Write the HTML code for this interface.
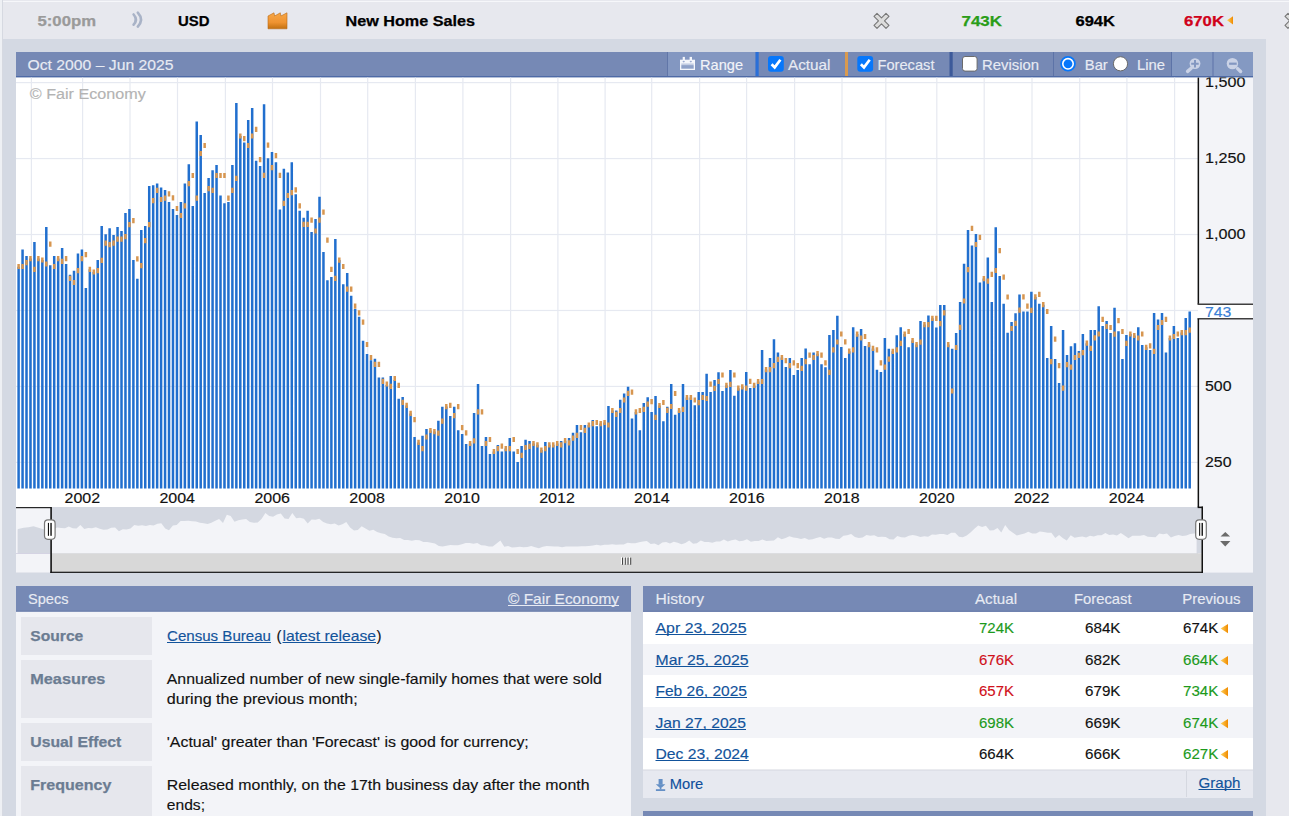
<!DOCTYPE html>
<html><head><meta charset="utf-8"><title>New Home Sales</title>
<style>html,body{margin:0;padding:0;width:1289px;height:816px;overflow:hidden;background:#e7e8ee;font-family:"Liberation Sans", sans-serif;}</style>
</head><body><svg width="1289" height="816" viewBox="0 0 1289 816" style="display:block" font-family='"Liberation Sans", sans-serif'><rect x="0" y="0" width="1289" height="816" fill="#e7e8ee"/><rect x="0" y="1" width="1289" height="1" fill="#f6f7fa"/><rect x="0" y="0" width="2" height="816" fill="#eef0f4"/><rect x="2" y="0" width="1" height="816" fill="#d6d9e1"/><rect x="3" y="39" width="1263" height="777" fill="#d4d9e3"/><text x="37.5" y="26" font-size="14.5" fill="#9a9a9a" font-weight="bold" textLength="58.5" lengthAdjust="spacingAndGlyphs" stroke="#9a9a9a" stroke-width="0.25" >5:00pm</text><g fill="none" stroke="#a9b3c7" stroke-width="2.6" stroke-linecap="round"><path d="M133.6 14.5 Q138.2 19.6 133.6 24.7"/><path d="M137.8 12.6 Q144.2 19.6 137.8 26.6"/></g><text x="178" y="26" font-size="14.5" fill="#000" font-weight="bold" textLength="31.5" lengthAdjust="spacingAndGlyphs" stroke="#000" stroke-width="0.25" >USD</text><defs><linearGradient id="fac" x1="0" y1="0" x2="0" y2="1"><stop offset="0" stop-color="#f7a748"/><stop offset="0.6" stop-color="#ef9330"/><stop offset="1" stop-color="#c2700f"/></linearGradient><linearGradient id="arr" x1="0" y1="0" x2="1" y2="0"><stop offset="0" stop-color="#ffd25a"/><stop offset="1" stop-color="#f08a00"/></linearGradient></defs><path d="M268 16 L274 12.8 L274.6 16 L280.3 12.8 L280.9 16 L287 12.8 L287 28.8 L268 28.8 Z" fill="url(#fac)" stroke="#b96a14" stroke-width="0.6"/><text x="345.5" y="26" font-size="14.5" fill="#000" font-weight="bold" textLength="129.5" lengthAdjust="spacingAndGlyphs" stroke="#000" stroke-width="0.25" >New Home Sales</text><g transform="translate(881.5 20.8)"><path d="M-7.5 -4.5 L-4.5 -7.5 L0 -3 L4.5 -7.5 L7.5 -4.5 L3 0 L7.5 4.5 L4.5 7.5 L0 3 L-4.5 7.5 L-7.5 4.5 L-3 0 Z" fill="#dcdcdc" stroke="#777" stroke-width="1.1" stroke-linejoin="round"/></g><text x="961.5" y="26" font-size="14.5" fill="#2a9d18" font-weight="bold" textLength="40.5" lengthAdjust="spacingAndGlyphs" stroke="#2a9d18" stroke-width="0.25" >743K</text><text x="1075.5" y="26" font-size="14.5" fill="#000" font-weight="bold" textLength="39.5" lengthAdjust="spacingAndGlyphs" stroke="#000" stroke-width="0.25" >694K</text><text x="1184" y="26" font-size="14.5" fill="#d0021b" font-weight="bold" textLength="40" lengthAdjust="spacingAndGlyphs" stroke="#d0021b" stroke-width="0.25" >670K</text><path d="M1227 20.3 L1233 16.2 L1233 24.4 Z" fill="url(#arr)"/><g transform="translate(1292.5 20.8)"><path d="M-7.5 -4.5 L-4.5 -7.5 L0 -3 L4.5 -7.5 L7.5 -4.5 L3 0 L7.5 4.5 L4.5 7.5 L0 3 L-4.5 7.5 L-7.5 4.5 L-3 0 Z" fill="#dcdcdc" stroke="#777" stroke-width="1.1" stroke-linejoin="round"/></g><rect x="16" y="52" width="1237" height="25" fill="#7689b5"/><rect x="16" y="76" width="1237" height="1.6" fill="#4e6aa6"/><text x="27.5" y="70" font-size="14.5" fill="#e8ebf3" textLength="146" lengthAdjust="spacingAndGlyphs" stroke="#e8ebf3" stroke-width="0.15" >Oct 2000 – Jun 2025</text><rect x="667" y="52" width="88.5" height="24" fill="#8397c1"/><rect x="667" y="52" width="1" height="24" fill="#6176a8"/><rect x="755.5" y="52" width="3.2" height="24" fill="#2a6fd8"/><rect x="680" y="59.7" width="15" height="10.3" fill="#f4f6fb"/><rect x="681.3" y="63.4" width="12.4" height="1.6" fill="#c3cde3"/><rect x="681.3" y="65.1" width="12.4" height="3.6" fill="#8ea1c8"/><rect x="682.7" y="56.9" width="2.2" height="3.2" fill="#f4f6fb"/><rect x="689.6" y="56.9" width="2.4" height="3.2" fill="#f4f6fb"/><ellipse cx="683.7" cy="61.6" rx="1.1" ry="0.8" fill="#9aaad0"/><ellipse cx="690.8" cy="61.6" rx="1.1" ry="0.8" fill="#9aaad0"/><text x="700" y="69.5" font-size="14.5" fill="#f2f4f9" textLength="43" lengthAdjust="spacingAndGlyphs" stroke="#f2f4f9" stroke-width="0.15" >Range</text><rect x="768" y="56" width="15.8" height="15.8" rx="3" fill="#0677fb"/><path d="M771.6 64.2 L774.7 67.4 L780.4 59.8" fill="none" stroke="#fff" stroke-width="2.7" stroke-linecap="butt" stroke-linejoin="miter"/><text x="788" y="70" font-size="14.5" fill="#e8ebf3" textLength="42.5" lengthAdjust="spacingAndGlyphs" stroke="#e8ebf3" stroke-width="0.15" >Actual</text><rect x="845" y="52" width="3" height="24" fill="#d99a4f"/><rect x="857.3" y="56" width="15.8" height="15.8" rx="3" fill="#0677fb"/><path d="M860.9 64.2 L864 67.4 L869.7 59.8" fill="none" stroke="#fff" stroke-width="2.7" stroke-linecap="butt" stroke-linejoin="miter"/><text x="877.5" y="70" font-size="14.5" fill="#e8ebf3" textLength="57" lengthAdjust="spacingAndGlyphs" stroke="#e8ebf3" stroke-width="0.15" >Forecast</text><rect x="949.5" y="52" width="3.2" height="24" fill="#3d5a9a"/><rect x="962.5" y="56.5" width="14.6" height="14.6" rx="2.5" fill="#fff" stroke="#6b6b6b" stroke-width="1"/><text x="982" y="70" font-size="14.5" fill="#e8ebf3" textLength="57" lengthAdjust="spacingAndGlyphs" stroke="#e8ebf3" stroke-width="0.15" >Revision</text><rect x="1053" y="52" width="1" height="24" fill="#5d73a7"/><circle cx="1068" cy="63.8" r="6.9" fill="#fff" stroke="#0677fb" stroke-width="1.8"/><circle cx="1068" cy="63.8" r="4.4" fill="#0677fb"/><text x="1084.8" y="70" font-size="14.5" fill="#e8ebf3" textLength="23" lengthAdjust="spacingAndGlyphs" stroke="#e8ebf3" stroke-width="0.15" >Bar</text><circle cx="1120.5" cy="63.8" r="7.1" fill="#fff" stroke="#6b6b6b" stroke-width="1"/><text x="1137" y="70" font-size="14.5" fill="#e8ebf3" textLength="28" lengthAdjust="spacingAndGlyphs" stroke="#e8ebf3" stroke-width="0.15" >Line</text><rect x="1171.5" y="52" width="81.5" height="24" fill="#8499c2"/><rect x="1171" y="52" width="1" height="24" fill="#5d73a7"/><rect x="1212.5" y="52" width="1" height="24" fill="#5d73a7"/><circle cx="1195" cy="63.6" r="5.4" fill="#cad2e6"/><path d="M1194 59.9 h2 v2.8 h2.7 v2 h-2.7 v2.8 h-2 v-2.8 h-2.8 v-2 h2.8 Z" fill="#8397c1"/><path d="M1191.2 68.3 L1187.6 71.4" stroke="#cad2e6" stroke-width="3.4" stroke-linecap="round"/><circle cx="1232.4" cy="63.6" r="5.7" fill="#cad2e6"/><rect x="1229.1" y="62.6" width="7.6" height="2.2" fill="#8397c1"/><path d="M1237.6 68.6 L1240.6 71.5" stroke="#cad2e6" stroke-width="3.4" stroke-linecap="round"/><rect x="16" y="77.6" width="1182" height="429.5" fill="#ffffff"/><rect x="1198" y="77.6" width="55" height="495" fill="#f3f4f8"/><rect x="16" y="82.00" width="1182" height="1.2" fill="#e6e9f1"/><rect x="16" y="157.96" width="1182" height="1.2" fill="#e6e9f1"/><rect x="16" y="233.92" width="1182" height="1.2" fill="#e6e9f1"/><rect x="16" y="309.88" width="1182" height="1.2" fill="#e6e9f1"/><rect x="16" y="385.84" width="1182" height="1.2" fill="#e6e9f1"/><rect x="16" y="461.80" width="1182" height="1.2" fill="#e6e9f1"/><rect x="30.80" y="77.6" width="1.2" height="411" fill="#e6e9f1"/><rect x="82.00" y="77.6" width="1.2" height="411" fill="#e6e9f1"/><rect x="129.40" y="77.6" width="1.2" height="411" fill="#e6e9f1"/><rect x="176.90" y="77.6" width="1.2" height="411" fill="#e6e9f1"/><rect x="224.80" y="77.6" width="1.2" height="411" fill="#e6e9f1"/><rect x="271.90" y="77.6" width="1.2" height="411" fill="#e6e9f1"/><rect x="319.90" y="77.6" width="1.2" height="411" fill="#e6e9f1"/><rect x="367.10" y="77.6" width="1.2" height="411" fill="#e6e9f1"/><rect x="414.80" y="77.6" width="1.2" height="411" fill="#e6e9f1"/><rect x="462.30" y="77.6" width="1.2" height="411" fill="#e6e9f1"/><rect x="510.00" y="77.6" width="1.2" height="411" fill="#e6e9f1"/><rect x="557.30" y="77.6" width="1.2" height="411" fill="#e6e9f1"/><rect x="604.50" y="77.6" width="1.2" height="411" fill="#e6e9f1"/><rect x="651.10" y="77.6" width="1.2" height="411" fill="#e6e9f1"/><rect x="699.00" y="77.6" width="1.2" height="411" fill="#e6e9f1"/><rect x="746.00" y="77.6" width="1.2" height="411" fill="#e6e9f1"/><rect x="794.00" y="77.6" width="1.2" height="411" fill="#e6e9f1"/><rect x="841.40" y="77.6" width="1.2" height="411" fill="#e6e9f1"/><rect x="885.20" y="77.6" width="1.2" height="411" fill="#e6e9f1"/><rect x="936.20" y="77.6" width="1.2" height="411" fill="#e6e9f1"/><rect x="983.60" y="77.6" width="1.2" height="411" fill="#e6e9f1"/><rect x="1031.40" y="77.6" width="1.2" height="411" fill="#e6e9f1"/><rect x="1079.10" y="77.6" width="1.2" height="411" fill="#e6e9f1"/><rect x="1126.30" y="77.6" width="1.2" height="411" fill="#e6e9f1"/><rect x="1174.00" y="77.6" width="1.2" height="411" fill="#e6e9f1"/><text x="29.8" y="99" font-size="15.3" fill="#b3b3b3" textLength="116" lengthAdjust="spacingAndGlyphs" stroke="#b3b3b3" stroke-width="0.15" >© Fair Economy</text><path d="M17.35 266.8h2.5V488.5h-2.5ZM21.31 249.6h2.5V488.5h-2.5ZM25.26 256.0h2.5V488.5h-2.5ZM29.22 258.6h2.5V488.5h-2.5ZM33.18 241.9h2.5V488.5h-2.5ZM37.14 258.6h2.5V488.5h-2.5ZM41.09 260.0h2.5V488.5h-2.5ZM45.05 227.0h2.5V488.5h-2.5ZM49.01 265.3h2.5V488.5h-2.5ZM52.96 256.0h2.5V488.5h-2.5ZM56.92 258.6h2.5V488.5h-2.5ZM60.88 248.0h2.5V488.5h-2.5ZM64.84 264.0h2.5V488.5h-2.5ZM68.79 274.7h2.5V488.5h-2.5ZM72.75 270.8h2.5V488.5h-2.5ZM76.71 253.5h2.5V488.5h-2.5ZM80.66 249.6h2.5V488.5h-2.5ZM84.62 288.0h2.5V488.5h-2.5ZM88.58 269.3h2.5V488.5h-2.5ZM92.54 272.0h2.5V488.5h-2.5ZM96.49 260.1h2.5V488.5h-2.5ZM100.45 226.1h2.5V488.5h-2.5ZM104.41 234.2h2.5V488.5h-2.5ZM108.37 228.3h2.5V488.5h-2.5ZM112.33 235.0h2.5V488.5h-2.5ZM116.29 227.0h2.5V488.5h-2.5ZM120.25 230.9h2.5V488.5h-2.5ZM124.21 212.9h2.5V488.5h-2.5ZM128.17 208.9h2.5V488.5h-2.5ZM132.13 260.1h2.5V488.5h-2.5ZM136.09 278.8h2.5V488.5h-2.5ZM140.05 230.0h2.5V488.5h-2.5ZM144.01 226.1h2.5V488.5h-2.5ZM147.97 186.1h2.5V488.5h-2.5ZM151.93 185.2h2.5V488.5h-2.5ZM155.89 183.5h2.5V488.5h-2.5ZM159.85 187.5h2.5V488.5h-2.5ZM163.81 190.0h2.5V488.5h-2.5ZM167.77 202.1h2.5V488.5h-2.5ZM171.73 208.9h2.5V488.5h-2.5ZM175.69 215.0h2.5V488.5h-2.5ZM179.65 202.1h2.5V488.5h-2.5ZM183.61 183.6h2.5V488.5h-2.5ZM187.57 164.2h2.5V488.5h-2.5ZM191.53 206.1h2.5V488.5h-2.5ZM195.49 121.4h2.5V488.5h-2.5ZM199.45 135.0h2.5V488.5h-2.5ZM203.41 193.0h2.5V488.5h-2.5ZM207.37 178.1h2.5V488.5h-2.5ZM211.33 170.2h2.5V488.5h-2.5ZM215.29 165.0h2.5V488.5h-2.5ZM219.25 195.6h2.5V488.5h-2.5ZM223.21 203.3h2.5V488.5h-2.5ZM227.17 201.9h2.5V488.5h-2.5ZM231.13 165.0h2.5V488.5h-2.5ZM235.09 102.9h2.5V488.5h-2.5ZM239.05 136.0h2.5V488.5h-2.5ZM243.01 142.4h2.5V488.5h-2.5ZM246.97 120.0h2.5V488.5h-2.5ZM250.93 108.0h2.5V488.5h-2.5ZM254.89 160.7h2.5V488.5h-2.5ZM258.85 166.0h2.5V488.5h-2.5ZM262.81 104.3h2.5V488.5h-2.5ZM266.77 158.3h2.5V488.5h-2.5ZM270.73 151.9h2.5V488.5h-2.5ZM274.69 162.2h2.5V488.5h-2.5ZM278.65 209.6h2.5V488.5h-2.5ZM282.61 168.8h2.5V488.5h-2.5ZM286.57 172.6h2.5V488.5h-2.5ZM290.53 162.2h2.5V488.5h-2.5ZM294.49 194.2h2.5V488.5h-2.5ZM298.45 210.7h2.5V488.5h-2.5ZM302.41 217.8h2.5V488.5h-2.5ZM306.37 210.7h2.5V488.5h-2.5ZM310.33 232.1h2.5V488.5h-2.5ZM314.29 219.1h2.5V488.5h-2.5ZM318.25 196.8h2.5V488.5h-2.5ZM322.21 251.9h2.5V488.5h-2.5ZM326.17 280.2h2.5V488.5h-2.5ZM330.13 277.1h2.5V488.5h-2.5ZM334.09 239.0h2.5V488.5h-2.5ZM338.05 260.1h2.5V488.5h-2.5ZM342.01 284.2h2.5V488.5h-2.5ZM345.97 273.1h2.5V488.5h-2.5ZM349.93 295.8h2.5V488.5h-2.5ZM353.89 309.1h2.5V488.5h-2.5ZM357.85 316.8h2.5V488.5h-2.5ZM361.81 340.8h2.5V488.5h-2.5ZM365.77 354.0h2.5V488.5h-2.5ZM369.73 360.2h2.5V488.5h-2.5ZM373.69 358.7h2.5V488.5h-2.5ZM377.65 377.4h2.5V488.5h-2.5ZM381.61 377.4h2.5V488.5h-2.5ZM385.57 384.9h2.5V488.5h-2.5ZM389.53 376.1h2.5V488.5h-2.5ZM393.49 380.0h2.5V488.5h-2.5ZM397.45 398.8h2.5V488.5h-2.5ZM401.42 397.0h2.5V488.5h-2.5ZM405.38 405.4h2.5V488.5h-2.5ZM409.35 413.4h2.5V488.5h-2.5ZM413.32 437.0h2.5V488.5h-2.5ZM417.28 442.4h2.5V488.5h-2.5ZM421.25 435.8h2.5V488.5h-2.5ZM425.22 429.1h2.5V488.5h-2.5ZM429.18 430.5h2.5V488.5h-2.5ZM433.15 431.6h2.5V488.5h-2.5ZM437.12 420.8h2.5V488.5h-2.5ZM441.08 406.8h2.5V488.5h-2.5ZM445.05 406.6h2.5V488.5h-2.5ZM449.02 415.9h2.5V488.5h-2.5ZM452.98 406.8h2.5V488.5h-2.5ZM456.95 430.3h2.5V488.5h-2.5ZM460.92 434.1h2.5V488.5h-2.5ZM464.88 443.9h2.5V488.5h-2.5ZM468.85 443.5h2.5V488.5h-2.5ZM472.82 413.1h2.5V488.5h-2.5ZM476.78 384.1h2.5V488.5h-2.5ZM480.75 446.0h2.5V488.5h-2.5ZM484.72 437.1h2.5V488.5h-2.5ZM488.69 453.9h2.5V488.5h-2.5ZM492.66 451.5h2.5V488.5h-2.5ZM496.63 444.9h2.5V488.5h-2.5ZM500.60 451.5h2.5V488.5h-2.5ZM504.55 448.6h2.5V488.5h-2.5ZM508.51 438.0h2.5V488.5h-2.5ZM512.46 451.5h2.5V488.5h-2.5ZM516.42 462.0h2.5V488.5h-2.5ZM520.37 446.1h2.5V488.5h-2.5ZM524.32 439.7h2.5V488.5h-2.5ZM528.28 441.0h2.5V488.5h-2.5ZM532.23 443.5h2.5V488.5h-2.5ZM536.19 444.8h2.5V488.5h-2.5ZM540.14 450.1h2.5V488.5h-2.5ZM544.09 442.0h2.5V488.5h-2.5ZM548.05 444.8h2.5V488.5h-2.5ZM552.00 444.8h2.5V488.5h-2.5ZM555.96 443.5h2.5V488.5h-2.5ZM559.91 441.0h2.5V488.5h-2.5ZM563.86 440.7h2.5V488.5h-2.5ZM567.82 438.0h2.5V488.5h-2.5ZM571.77 432.8h2.5V488.5h-2.5ZM575.73 425.0h2.5V488.5h-2.5ZM579.68 432.2h2.5V488.5h-2.5ZM583.63 425.0h2.5V488.5h-2.5ZM587.59 425.0h2.5V488.5h-2.5ZM591.54 420.1h2.5V488.5h-2.5ZM595.50 426.3h2.5V488.5h-2.5ZM599.45 423.6h2.5V488.5h-2.5ZM603.33 422.5h2.5V488.5h-2.5ZM607.20 406.0h2.5V488.5h-2.5ZM611.12 410.5h2.5V488.5h-2.5ZM615.05 410.6h2.5V488.5h-2.5ZM618.97 399.8h2.5V488.5h-2.5ZM622.90 393.4h2.5V488.5h-2.5ZM626.82 386.8h2.5V488.5h-2.5ZM630.74 418.4h2.5V488.5h-2.5ZM634.67 411.9h2.5V488.5h-2.5ZM638.59 430.2h2.5V488.5h-2.5ZM642.52 403.0h2.5V488.5h-2.5ZM646.44 397.2h2.5V488.5h-2.5ZM650.36 411.9h2.5V488.5h-2.5ZM654.29 396.0h2.5V488.5h-2.5ZM658.21 405.5h2.5V488.5h-2.5ZM662.13 421.2h2.5V488.5h-2.5ZM666.06 406.8h2.5V488.5h-2.5ZM669.98 384.1h2.5V488.5h-2.5ZM673.91 414.8h2.5V488.5h-2.5ZM677.83 410.5h2.5V488.5h-2.5ZM681.75 384.1h2.5V488.5h-2.5ZM685.68 397.5h2.5V488.5h-2.5ZM689.60 397.5h2.5V488.5h-2.5ZM693.53 405.2h2.5V488.5h-2.5ZM697.45 392.1h2.5V488.5h-2.5ZM701.41 392.1h2.5V488.5h-2.5ZM705.37 373.8h2.5V488.5h-2.5ZM709.33 392.1h2.5V488.5h-2.5ZM713.30 380.0h2.5V488.5h-2.5ZM717.26 372.2h2.5V488.5h-2.5ZM721.22 391.0h2.5V488.5h-2.5ZM725.18 385.3h2.5V488.5h-2.5ZM729.14 369.9h2.5V488.5h-2.5ZM733.10 395.8h2.5V488.5h-2.5ZM737.07 388.2h2.5V488.5h-2.5ZM741.03 386.8h2.5V488.5h-2.5ZM744.99 372.1h2.5V488.5h-2.5ZM748.95 388.0h2.5V488.5h-2.5ZM752.91 385.4h2.5V488.5h-2.5ZM756.87 381.5h2.5V488.5h-2.5ZM760.83 350.0h2.5V488.5h-2.5ZM764.80 369.6h2.5V488.5h-2.5ZM768.76 358.0h2.5V488.5h-2.5ZM772.72 339.2h2.5V488.5h-2.5ZM776.68 352.5h2.5V488.5h-2.5ZM780.64 357.5h2.5V488.5h-2.5ZM784.60 367.0h2.5V488.5h-2.5ZM788.57 358.0h2.5V488.5h-2.5ZM792.53 375.0h2.5V488.5h-2.5ZM796.49 369.9h2.5V488.5h-2.5ZM800.45 358.0h2.5V488.5h-2.5ZM804.41 348.5h2.5V488.5h-2.5ZM808.37 364.2h2.5V488.5h-2.5ZM812.33 352.5h2.5V488.5h-2.5ZM816.29 353.7h2.5V488.5h-2.5ZM820.25 364.2h2.5V488.5h-2.5ZM824.21 367.2h2.5V488.5h-2.5ZM828.17 335.1h2.5V488.5h-2.5ZM832.13 329.9h2.5V488.5h-2.5ZM836.09 315.7h2.5V488.5h-2.5ZM840.05 347.1h2.5V488.5h-2.5ZM844.01 358.0h2.5V488.5h-2.5ZM847.97 351.2h2.5V488.5h-2.5ZM851.93 327.3h2.5V488.5h-2.5ZM855.89 334.1h2.5V488.5h-2.5ZM859.85 328.9h2.5V488.5h-2.5ZM863.81 346.1h2.5V488.5h-2.5ZM867.77 344.6h2.5V488.5h-2.5ZM871.73 348.4h2.5V488.5h-2.5ZM875.69 369.8h2.5V488.5h-2.5ZM879.65 372.0h2.5V488.5h-2.5ZM883.61 337.9h2.5V488.5h-2.5ZM887.57 348.7h2.5V488.5h-2.5ZM891.53 351.3h2.5V488.5h-2.5ZM895.49 335.2h2.5V488.5h-2.5ZM899.45 327.2h2.5V488.5h-2.5ZM903.41 334.1h2.5V488.5h-2.5ZM907.37 347.2h2.5V488.5h-2.5ZM911.33 340.5h2.5V488.5h-2.5ZM915.29 344.6h2.5V488.5h-2.5ZM919.25 321.0h2.5V488.5h-2.5ZM923.21 324.6h2.5V488.5h-2.5ZM927.17 315.6h2.5V488.5h-2.5ZM931.13 318.3h2.5V488.5h-2.5ZM935.09 327.4h2.5V488.5h-2.5ZM939.05 305.0h2.5V488.5h-2.5ZM943.01 305.0h2.5V488.5h-2.5ZM946.97 344.6h2.5V488.5h-2.5ZM950.93 348.7h2.5V488.5h-2.5ZM954.89 333.0h2.5V488.5h-2.5ZM958.85 302.1h2.5V488.5h-2.5ZM962.81 263.8h2.5V488.5h-2.5ZM966.77 229.9h2.5V488.5h-2.5ZM970.73 245.5h2.5V488.5h-2.5ZM974.69 234.0h2.5V488.5h-2.5ZM978.65 282.6h2.5V488.5h-2.5ZM982.61 278.6h2.5V488.5h-2.5ZM986.57 257.5h2.5V488.5h-2.5ZM990.53 302.1h2.5V488.5h-2.5ZM994.49 227.2h2.5V488.5h-2.5ZM998.45 276.1h2.5V488.5h-2.5ZM1002.41 303.7h2.5V488.5h-2.5ZM1006.37 332.8h2.5V488.5h-2.5ZM1010.33 322.0h2.5V488.5h-2.5ZM1014.29 313.2h2.5V488.5h-2.5ZM1018.25 294.4h2.5V488.5h-2.5ZM1022.21 311.6h2.5V488.5h-2.5ZM1026.17 311.6h2.5V488.5h-2.5ZM1030.13 291.8h2.5V488.5h-2.5ZM1034.09 296.9h2.5V488.5h-2.5ZM1038.05 303.8h2.5V488.5h-2.5ZM1042.01 304.7h2.5V488.5h-2.5ZM1045.97 357.9h2.5V488.5h-2.5ZM1049.93 326.0h2.5V488.5h-2.5ZM1053.89 359.1h2.5V488.5h-2.5ZM1057.85 382.9h2.5V488.5h-2.5ZM1061.81 330.0h2.5V488.5h-2.5ZM1065.77 355.0h2.5V488.5h-2.5ZM1069.73 346.2h2.5V488.5h-2.5ZM1073.69 343.2h2.5V488.5h-2.5ZM1077.65 351.0h2.5V488.5h-2.5ZM1081.61 334.1h2.5V488.5h-2.5ZM1085.57 343.2h2.5V488.5h-2.5ZM1089.53 330.0h2.5V488.5h-2.5ZM1093.49 330.0h2.5V488.5h-2.5ZM1097.45 306.2h2.5V488.5h-2.5ZM1101.41 326.1h2.5V488.5h-2.5ZM1105.36 320.9h2.5V488.5h-2.5ZM1109.32 332.9h2.5V488.5h-2.5ZM1113.28 307.8h2.5V488.5h-2.5ZM1117.23 331.2h2.5V488.5h-2.5ZM1121.19 359.1h2.5V488.5h-2.5ZM1125.15 335.1h2.5V488.5h-2.5ZM1129.10 334.0h2.5V488.5h-2.5ZM1133.06 335.5h2.5V488.5h-2.5ZM1137.02 327.3h2.5V488.5h-2.5ZM1140.97 344.9h2.5V488.5h-2.5ZM1144.93 347.3h2.5V488.5h-2.5ZM1148.88 350.0h2.5V488.5h-2.5ZM1152.84 313.0h2.5V488.5h-2.5ZM1156.80 319.4h2.5V488.5h-2.5ZM1160.75 313.0h2.5V488.5h-2.5ZM1164.71 352.5h2.5V488.5h-2.5ZM1168.67 338.0h2.5V488.5h-2.5ZM1172.62 326.1h2.5V488.5h-2.5ZM1176.58 338.0h2.5V488.5h-2.5ZM1180.54 332.6h2.5V488.5h-2.5ZM1184.49 317.9h2.5V488.5h-2.5ZM1188.45 311.6h2.5V488.5h-2.5Z" fill="#216fce"/><path d="M17.35 263.9h2.5v5.2h-2.5ZM21.31 263.9h2.5v5.2h-2.5ZM25.26 260.0h2.5v5.2h-2.5ZM29.22 256.0h2.5v5.2h-2.5ZM33.18 266.7h2.5v5.2h-2.5ZM37.14 256.0h2.5v5.2h-2.5ZM41.09 257.4h2.5v5.2h-2.5ZM45.05 261.4h2.5v5.2h-2.5ZM49.01 241.6h2.5v5.2h-2.5ZM52.96 263.9h2.5v5.2h-2.5ZM56.92 256.0h2.5v5.2h-2.5ZM60.88 258.8h2.5v5.2h-2.5ZM64.84 256.0h2.5v5.2h-2.5ZM68.79 275.7h2.5v5.2h-2.5ZM72.75 279.9h2.5v5.2h-2.5ZM76.71 268.0h2.5v5.2h-2.5ZM80.66 256.0h2.5v5.2h-2.5ZM84.62 252.0h2.5v5.2h-2.5ZM88.58 266.7h2.5v5.2h-2.5ZM92.54 269.4h2.5v5.2h-2.5ZM96.49 268.0h2.5v5.2h-2.5ZM100.45 257.8h2.5v5.2h-2.5ZM104.41 240.5h2.5v5.2h-2.5ZM108.37 242.0h2.5v5.2h-2.5ZM112.33 240.5h2.5v5.2h-2.5ZM116.29 236.5h2.5v5.2h-2.5ZM120.25 236.5h2.5v5.2h-2.5ZM124.21 234.0h2.5v5.2h-2.5ZM128.17 222.1h2.5v5.2h-2.5ZM132.13 218.0h2.5v5.2h-2.5ZM136.09 256.3h2.5v5.2h-2.5ZM140.05 263.0h2.5v5.2h-2.5ZM144.01 238.1h2.5v5.2h-2.5ZM147.97 222.1h2.5v5.2h-2.5ZM151.93 198.1h2.5v5.2h-2.5ZM155.89 187.8h2.5v5.2h-2.5ZM159.85 196.9h2.5v5.2h-2.5ZM163.81 195.5h2.5v5.2h-2.5ZM167.77 191.2h2.5v5.2h-2.5ZM171.73 195.3h2.5v5.2h-2.5ZM175.69 205.9h2.5v5.2h-2.5ZM179.65 212.9h2.5v5.2h-2.5ZM183.61 203.3h2.5v5.2h-2.5ZM187.57 181.0h2.5v5.2h-2.5ZM191.53 172.9h2.5v5.2h-2.5ZM195.49 195.6h2.5v5.2h-2.5ZM199.45 150.9h2.5v5.2h-2.5ZM203.41 142.9h2.5v5.2h-2.5ZM207.37 186.1h2.5v5.2h-2.5ZM211.33 187.7h2.5v5.2h-2.5ZM215.29 172.9h2.5v5.2h-2.5ZM219.25 172.9h2.5v5.2h-2.5ZM223.21 172.9h2.5v5.2h-2.5ZM227.17 195.6h2.5v5.2h-2.5ZM231.13 187.7h2.5v5.2h-2.5ZM235.09 175.8h2.5v5.2h-2.5ZM239.05 133.4h2.5v5.2h-2.5ZM243.01 136.0h2.5v5.2h-2.5ZM246.97 142.9h2.5v5.2h-2.5ZM250.93 133.4h2.5v5.2h-2.5ZM254.89 126.8h2.5v5.2h-2.5ZM258.85 157.0h2.5v5.2h-2.5ZM262.81 172.8h2.5v5.2h-2.5ZM266.77 142.6h2.5v5.2h-2.5ZM270.73 165.1h2.5v5.2h-2.5ZM274.69 153.0h2.5v5.2h-2.5ZM278.65 172.8h2.5v5.2h-2.5ZM282.61 200.8h2.5v5.2h-2.5ZM286.57 192.9h2.5v5.2h-2.5ZM290.53 190.0h2.5v5.2h-2.5ZM294.49 187.2h2.5v5.2h-2.5ZM298.45 203.3h2.5v5.2h-2.5ZM302.41 221.8h2.5v5.2h-2.5ZM306.37 221.8h2.5v5.2h-2.5ZM310.33 217.6h2.5v5.2h-2.5ZM314.29 228.4h2.5v5.2h-2.5ZM318.25 217.6h2.5v5.2h-2.5ZM322.21 209.6h2.5v5.2h-2.5ZM326.17 237.5h2.5v5.2h-2.5ZM330.13 266.8h2.5v5.2h-2.5ZM334.09 275.8h2.5v5.2h-2.5ZM338.05 257.5h2.5v5.2h-2.5ZM342.01 263.9h2.5v5.2h-2.5ZM345.97 286.6h2.5v5.2h-2.5ZM349.93 286.6h2.5v5.2h-2.5ZM353.89 303.6h2.5v5.2h-2.5ZM357.85 310.2h2.5v5.2h-2.5ZM361.81 319.5h2.5v5.2h-2.5ZM365.77 341.9h2.5v5.2h-2.5ZM369.73 354.9h2.5v5.2h-2.5ZM373.69 361.8h2.5v5.2h-2.5ZM377.65 361.8h2.5v5.2h-2.5ZM381.61 378.7h2.5v5.2h-2.5ZM385.57 381.4h2.5v5.2h-2.5ZM389.53 383.8h2.5v5.2h-2.5ZM393.49 375.9h2.5v5.2h-2.5ZM397.45 382.7h2.5v5.2h-2.5ZM401.42 399.7h2.5v5.2h-2.5ZM405.38 402.8h2.5v5.2h-2.5ZM409.35 410.8h2.5v5.2h-2.5ZM413.32 417.0h2.5v5.2h-2.5ZM417.28 439.8h2.5v5.2h-2.5ZM421.25 446.1h2.5v5.2h-2.5ZM425.22 434.4h2.5v5.2h-2.5ZM429.18 427.9h2.5v5.2h-2.5ZM433.15 429.0h2.5v5.2h-2.5ZM437.12 430.5h2.5v5.2h-2.5ZM441.08 418.6h2.5v5.2h-2.5ZM445.05 404.0h2.5v5.2h-2.5ZM449.02 402.8h2.5v5.2h-2.5ZM452.98 413.1h2.5v5.2h-2.5ZM456.95 404.0h2.5v5.2h-2.5ZM460.92 425.1h2.5v5.2h-2.5ZM464.88 430.2h2.5v5.2h-2.5ZM468.85 440.9h2.5v5.2h-2.5ZM472.82 438.3h2.5v5.2h-2.5ZM476.78 409.3h2.5v5.2h-2.5ZM480.75 409.3h2.5v5.2h-2.5ZM484.72 440.9h2.5v5.2h-2.5ZM488.69 436.9h2.5v5.2h-2.5ZM492.66 448.9h2.5v5.2h-2.5ZM496.63 446.0h2.5v5.2h-2.5ZM500.60 443.6h2.5v5.2h-2.5ZM504.55 446.0h2.5v5.2h-2.5ZM508.51 446.0h2.5v5.2h-2.5ZM512.46 436.9h2.5v5.2h-2.5ZM516.42 448.9h2.5v5.2h-2.5ZM520.37 452.8h2.5v5.2h-2.5ZM524.32 444.9h2.5v5.2h-2.5ZM528.28 443.8h2.5v5.2h-2.5ZM532.23 440.9h2.5v5.2h-2.5ZM536.19 442.2h2.5v5.2h-2.5ZM540.14 447.5h2.5v5.2h-2.5ZM544.09 446.0h2.5v5.2h-2.5ZM548.05 442.2h2.5v5.2h-2.5ZM552.00 442.2h2.5v5.2h-2.5ZM555.96 440.9h2.5v5.2h-2.5ZM559.91 442.2h2.5v5.2h-2.5ZM563.86 438.1h2.5v5.2h-2.5ZM567.82 440.3h2.5v5.2h-2.5ZM571.77 435.6h2.5v5.2h-2.5ZM575.73 432.8h2.5v5.2h-2.5ZM579.68 424.9h2.5v5.2h-2.5ZM583.63 427.8h2.5v5.2h-2.5ZM587.59 422.4h2.5v5.2h-2.5ZM591.54 421.0h2.5v5.2h-2.5ZM595.50 419.9h2.5v5.2h-2.5ZM599.45 421.0h2.5v5.2h-2.5ZM603.33 419.9h2.5v5.2h-2.5ZM607.20 422.4h2.5v5.2h-2.5ZM611.12 407.9h2.5v5.2h-2.5ZM615.05 411.8h2.5v5.2h-2.5ZM618.97 407.9h2.5v5.2h-2.5ZM622.90 397.4h2.5v5.2h-2.5ZM626.82 390.8h2.5v5.2h-2.5ZM630.74 389.5h2.5v5.2h-2.5ZM634.67 409.3h2.5v5.2h-2.5ZM638.59 407.9h2.5v5.2h-2.5ZM642.52 406.8h2.5v5.2h-2.5ZM646.44 401.5h2.5v5.2h-2.5ZM650.36 399.0h2.5v5.2h-2.5ZM654.29 414.8h2.5v5.2h-2.5ZM658.21 402.9h2.5v5.2h-2.5ZM662.13 399.9h2.5v5.2h-2.5ZM666.06 407.8h2.5v5.2h-2.5ZM669.98 403.9h2.5v5.2h-2.5ZM673.91 390.9h2.5v5.2h-2.5ZM677.83 407.9h2.5v5.2h-2.5ZM681.75 406.8h2.5v5.2h-2.5ZM685.68 394.9h2.5v5.2h-2.5ZM689.60 394.9h2.5v5.2h-2.5ZM693.53 397.4h2.5v5.2h-2.5ZM697.45 400.0h2.5v5.2h-2.5ZM701.41 394.9h2.5v5.2h-2.5ZM705.37 395.9h2.5v5.2h-2.5ZM709.33 381.5h2.5v5.2h-2.5ZM713.30 385.8h2.5v5.2h-2.5ZM717.26 378.9h2.5v5.2h-2.5ZM721.22 372.4h2.5v5.2h-2.5ZM725.18 382.7h2.5v5.2h-2.5ZM729.14 381.8h2.5v5.2h-2.5ZM733.10 372.4h2.5v5.2h-2.5ZM737.07 385.6h2.5v5.2h-2.5ZM741.03 384.2h2.5v5.2h-2.5ZM744.99 385.6h2.5v5.2h-2.5ZM748.95 378.8h2.5v5.2h-2.5ZM752.91 382.8h2.5v5.2h-2.5ZM756.87 378.9h2.5v5.2h-2.5ZM760.83 378.9h2.5v5.2h-2.5ZM764.80 367.0h2.5v5.2h-2.5ZM768.76 367.0h2.5v5.2h-2.5ZM772.72 363.0h2.5v5.2h-2.5ZM776.68 356.7h2.5v5.2h-2.5ZM780.64 354.9h2.5v5.2h-2.5ZM784.60 358.0h2.5v5.2h-2.5ZM788.57 363.0h2.5v5.2h-2.5ZM792.53 360.2h2.5v5.2h-2.5ZM796.49 363.0h2.5v5.2h-2.5ZM800.45 365.7h2.5v5.2h-2.5ZM804.41 359.0h2.5v5.2h-2.5ZM808.37 352.5h2.5v5.2h-2.5ZM812.33 354.9h2.5v5.2h-2.5ZM816.29 351.1h2.5v5.2h-2.5ZM820.25 352.5h2.5v5.2h-2.5ZM824.21 360.3h2.5v5.2h-2.5ZM828.17 369.8h2.5v5.2h-2.5ZM832.13 347.2h2.5v5.2h-2.5ZM836.09 339.4h2.5v5.2h-2.5ZM840.05 331.4h2.5v5.2h-2.5ZM844.01 339.3h2.5v5.2h-2.5ZM847.97 348.6h2.5v5.2h-2.5ZM851.93 347.2h2.5v5.2h-2.5ZM855.89 331.5h2.5v5.2h-2.5ZM859.85 335.4h2.5v5.2h-2.5ZM863.81 333.9h2.5v5.2h-2.5ZM867.77 342.0h2.5v5.2h-2.5ZM871.73 345.8h2.5v5.2h-2.5ZM875.69 347.2h2.5v5.2h-2.5ZM879.65 360.2h2.5v5.2h-2.5ZM883.61 364.5h2.5v5.2h-2.5ZM887.57 356.6h2.5v5.2h-2.5ZM891.53 348.7h2.5v5.2h-2.5ZM895.49 347.3h2.5v5.2h-2.5ZM899.45 340.8h2.5v5.2h-2.5ZM903.41 331.5h2.5v5.2h-2.5ZM907.37 328.9h2.5v5.2h-2.5ZM911.33 337.9h2.5v5.2h-2.5ZM915.29 342.0h2.5v5.2h-2.5ZM919.25 339.5h2.5v5.2h-2.5ZM923.21 322.0h2.5v5.2h-2.5ZM927.17 322.0h2.5v5.2h-2.5ZM931.13 315.7h2.5v5.2h-2.5ZM935.09 315.7h2.5v5.2h-2.5ZM939.05 321.0h2.5v5.2h-2.5ZM943.01 310.2h2.5v5.2h-2.5ZM946.97 342.0h2.5v5.2h-2.5ZM950.93 388.4h2.5v5.2h-2.5ZM954.89 344.9h2.5v5.2h-2.5ZM958.85 324.8h2.5v5.2h-2.5ZM962.81 298.4h2.5v5.2h-2.5ZM966.77 267.0h2.5v5.2h-2.5ZM970.73 225.8h2.5v5.2h-2.5ZM974.69 241.9h2.5v5.2h-2.5ZM978.65 234.8h2.5v5.2h-2.5ZM982.61 276.0h2.5v5.2h-2.5ZM986.57 278.6h2.5v5.2h-2.5ZM990.53 271.7h2.5v5.2h-2.5ZM994.49 267.9h2.5v5.2h-2.5ZM998.45 248.0h2.5v5.2h-2.5ZM1002.41 274.5h2.5v5.2h-2.5ZM1006.37 294.4h2.5v5.2h-2.5ZM1010.33 325.9h2.5v5.2h-2.5ZM1014.29 320.7h2.5v5.2h-2.5ZM1018.25 307.6h2.5v5.2h-2.5ZM1022.21 294.3h2.5v5.2h-2.5ZM1026.17 303.6h2.5v5.2h-2.5ZM1030.13 307.7h2.5v5.2h-2.5ZM1034.09 294.3h2.5v5.2h-2.5ZM1038.05 291.7h2.5v5.2h-2.5ZM1042.01 302.1h2.5v5.2h-2.5ZM1045.97 308.9h2.5v5.2h-2.5ZM1049.93 359.0h2.5v5.2h-2.5ZM1053.89 336.5h2.5v5.2h-2.5ZM1057.85 363.0h2.5v5.2h-2.5ZM1061.81 385.6h2.5v5.2h-2.5ZM1065.77 362.0h2.5v5.2h-2.5ZM1069.73 364.5h2.5v5.2h-2.5ZM1073.69 354.9h2.5v5.2h-2.5ZM1077.65 352.7h2.5v5.2h-2.5ZM1081.61 350.0h2.5v5.2h-2.5ZM1085.57 340.6h2.5v5.2h-2.5ZM1089.53 345.8h2.5v5.2h-2.5ZM1093.49 335.2h2.5v5.2h-2.5ZM1097.45 331.4h2.5v5.2h-2.5ZM1101.41 316.8h2.5v5.2h-2.5ZM1105.36 323.9h2.5v5.2h-2.5ZM1109.32 324.9h2.5v5.2h-2.5ZM1113.28 331.5h2.5v5.2h-2.5ZM1117.23 318.1h2.5v5.2h-2.5ZM1121.19 328.9h2.5v5.2h-2.5ZM1125.15 340.7h2.5v5.2h-2.5ZM1129.10 331.4h2.5v5.2h-2.5ZM1133.06 332.9h2.5v5.2h-2.5ZM1137.02 335.4h2.5v5.2h-2.5ZM1140.97 331.4h2.5v5.2h-2.5ZM1144.93 344.7h2.5v5.2h-2.5ZM1148.88 343.2h2.5v5.2h-2.5ZM1152.84 348.8h2.5v5.2h-2.5ZM1156.80 324.9h2.5v5.2h-2.5ZM1160.75 319.9h2.5v5.2h-2.5ZM1164.71 316.8h2.5v5.2h-2.5ZM1168.67 335.4h2.5v5.2h-2.5ZM1172.62 333.9h2.5v5.2h-2.5ZM1176.58 331.4h2.5v5.2h-2.5ZM1180.54 330.0h2.5v5.2h-2.5ZM1184.49 330.0h2.5v5.2h-2.5ZM1188.45 327.5h2.5v5.2h-2.5Z" fill="#d79650"/><rect x="1197.6" y="77.6" width="1.5" height="226.6" fill="#111"/><rect x="1197.6" y="318.4" width="1.5" height="189.5" fill="#111"/><rect x="1198" y="303.8" width="55" height="15" fill="#ffffff"/><rect x="1197.6" y="303.6" width="55.4" height="1.2" fill="#111"/><rect x="1197.6" y="318.2" width="55.4" height="1.2" fill="#111"/><text x="1205" y="163.4" font-size="14" fill="#111" textLength="40.4" lengthAdjust="spacingAndGlyphs" stroke="#111" stroke-width="0.15" >1,250</text><text x="1205" y="239.3" font-size="14" fill="#111" textLength="40.4" lengthAdjust="spacingAndGlyphs" stroke="#111" stroke-width="0.15" >1,000</text><text x="1205" y="391.2" font-size="14" fill="#111" textLength="26.5" lengthAdjust="spacingAndGlyphs" stroke="#111" stroke-width="0.15" >500</text><text x="1205" y="467.2" font-size="14" fill="#111" textLength="26.5" lengthAdjust="spacingAndGlyphs" stroke="#111" stroke-width="0.15" >250</text><svg x="1198" y="77.6" width="55" height="20" overflow="hidden"><text x="7" y="9" font-size="14" fill="#111" textLength="40.4" lengthAdjust="spacingAndGlyphs" stroke="#111" stroke-width="0.15" >1,500</text></svg><text x="1205" y="316.9" font-size="15.2" fill="#3a7fd5" textLength="26.4" lengthAdjust="spacingAndGlyphs" stroke="#3a7fd5" stroke-width="0.15" >743</text><text x="82.3" y="502.8" font-size="14" fill="#111" text-anchor="middle" textLength="35.6" lengthAdjust="spacingAndGlyphs" stroke="#111" stroke-width="0.15" >2002</text><text x="177.2" y="502.8" font-size="14" fill="#111" text-anchor="middle" textLength="35.6" lengthAdjust="spacingAndGlyphs" stroke="#111" stroke-width="0.15" >2004</text><text x="272.2" y="502.8" font-size="14" fill="#111" text-anchor="middle" textLength="35.6" lengthAdjust="spacingAndGlyphs" stroke="#111" stroke-width="0.15" >2006</text><text x="367.1" y="502.8" font-size="14" fill="#111" text-anchor="middle" textLength="35.6" lengthAdjust="spacingAndGlyphs" stroke="#111" stroke-width="0.15" >2008</text><text x="462.1" y="502.8" font-size="14" fill="#111" text-anchor="middle" textLength="35.6" lengthAdjust="spacingAndGlyphs" stroke="#111" stroke-width="0.15" >2010</text><text x="557.0" y="502.8" font-size="14" fill="#111" text-anchor="middle" textLength="35.6" lengthAdjust="spacingAndGlyphs" stroke="#111" stroke-width="0.15" >2012</text><text x="651.9" y="502.8" font-size="14" fill="#111" text-anchor="middle" textLength="35.6" lengthAdjust="spacingAndGlyphs" stroke="#111" stroke-width="0.15" >2014</text><text x="746.9" y="502.8" font-size="14" fill="#111" text-anchor="middle" textLength="35.6" lengthAdjust="spacingAndGlyphs" stroke="#111" stroke-width="0.15" >2016</text><text x="841.8" y="502.8" font-size="14" fill="#111" text-anchor="middle" textLength="35.6" lengthAdjust="spacingAndGlyphs" stroke="#111" stroke-width="0.15" >2018</text><text x="936.8" y="502.8" font-size="14" fill="#111" text-anchor="middle" textLength="35.6" lengthAdjust="spacingAndGlyphs" stroke="#111" stroke-width="0.15" >2020</text><text x="1031.7" y="502.8" font-size="14" fill="#111" text-anchor="middle" textLength="35.6" lengthAdjust="spacingAndGlyphs" stroke="#111" stroke-width="0.15" >2022</text><text x="1126.6" y="502.8" font-size="14" fill="#111" text-anchor="middle" textLength="35.6" lengthAdjust="spacingAndGlyphs" stroke="#111" stroke-width="0.15" >2024</text><rect x="16" y="507" width="34.8" height="65.5" fill="#f3f4f8"/><rect x="50.8" y="507" width="1151.2" height="46.4" fill="#d4d8e1"/><clipPath id="cl"><rect x="16" y="507" width="34.8" height="47"/></clipPath><clipPath id="cr"><rect x="50.8" y="507" width="1151.2" height="47"/></clipPath><path d="M17.6 553.4 L17.6 529.5 L18.2 529.0 L23.6 527.8 L28.5 527.2 L33.5 526.2 L41.0 528.5 L44.0 529.5 L53.4 529.1 L57.3 527.4 L61.1 528.0 L65.0 528.2 L68.8 526.6 L72.7 528.2 L76.5 528.4 L80.4 525.1 L84.3 528.9 L88.1 528.0 L92.0 528.2 L95.8 527.2 L99.7 528.8 L103.5 529.8 L107.4 529.5 L111.2 527.7 L115.1 527.4 L118.9 531.2 L122.8 529.3 L126.6 529.6 L130.5 528.4 L134.3 525.0 L138.2 525.8 L142.1 525.3 L145.9 525.9 L149.8 525.1 L153.6 525.5 L157.5 523.7 L161.3 523.3 L165.2 528.4 L169.0 530.2 L172.9 525.4 L176.7 525.0 L180.6 521.1 L184.4 521.0 L188.3 520.8 L192.1 521.2 L196.0 521.5 L199.9 522.7 L203.7 523.3 L207.6 523.9 L211.4 522.7 L215.3 520.8 L219.1 518.9 L223.0 523.1 L226.8 514.7 L230.7 516.0 L234.5 521.8 L238.4 520.3 L242.2 519.5 L246.1 519.0 L249.9 522.0 L253.8 522.8 L257.7 522.6 L261.5 519.0 L265.4 512.9 L269.2 516.1 L273.1 516.8 L276.9 514.6 L280.8 513.4 L284.6 518.6 L288.5 519.1 L292.3 513.0 L296.2 518.3 L300.0 517.7 L303.9 518.7 L307.7 523.4 L311.6 519.4 L315.5 519.8 L319.3 518.7 L323.2 521.9 L327.0 523.5 L330.9 524.2 L334.7 523.5 L338.6 525.6 L342.4 524.3 L346.3 522.1 L350.1 527.6 L354.0 530.4 L357.8 530.1 L361.7 526.3 L365.5 528.4 L369.4 530.8 L373.3 529.7 L377.1 531.9 L381.0 533.2 L384.8 534.0 L388.7 536.4 L392.5 537.7 L396.4 538.3 L400.2 538.1 L404.1 540.0 L407.9 540.0 L411.8 540.7 L415.6 539.9 L419.5 540.2 L423.3 542.1 L427.2 541.9 L431.1 542.8 L434.9 543.5 L438.8 545.9 L442.6 546.4 L446.5 545.8 L450.3 545.1 L454.2 545.2 L458.0 545.3 L461.9 544.3 L465.7 542.9 L469.6 542.9 L473.4 543.8 L477.3 542.9 L481.1 545.2 L485.0 545.6 L488.9 546.6 L492.7 546.5 L496.6 543.5 L500.4 540.6 L504.3 546.8 L508.1 545.9 L512.0 547.5 L515.8 547.3 L519.7 546.7 L523.5 547.3 L527.4 547.0 L531.2 546.0 L535.1 547.3 L538.9 548.3 L542.8 546.8 L546.7 546.1 L550.5 546.3 L554.4 546.5 L558.2 546.6 L562.1 547.2 L565.9 546.4 L569.8 546.6 L573.6 546.6 L577.5 546.5 L581.3 546.3 L585.2 546.2 L589.0 546.0 L592.9 545.5 L596.7 544.7 L600.6 545.4 L604.5 544.7 L608.3 544.7 L612.2 544.2 L616.0 544.8 L619.9 544.6 L623.7 544.4 L627.6 542.8 L631.4 543.3 L635.3 543.3 L639.1 542.2 L643.0 541.6 L646.8 540.9 L650.7 544.0 L654.5 543.4 L658.4 545.2 L662.3 542.5 L666.1 541.9 L670.0 543.4 L673.8 541.8 L677.7 542.8 L681.5 544.3 L685.4 542.9 L689.2 540.6 L693.1 543.7 L696.9 543.3 L700.8 540.6 L704.6 542.0 L708.5 542.0 L712.3 542.7 L716.2 541.4 L720.1 541.4 L723.9 539.6 L727.8 541.4 L731.6 540.2 L735.5 539.5 L739.3 541.3 L743.2 540.8 L747.0 539.2 L750.9 541.8 L754.7 541.1 L758.6 540.9 L762.4 539.5 L766.3 541.0 L770.1 540.8 L774.0 540.4 L777.9 537.3 L781.7 539.2 L785.6 538.1 L789.4 536.2 L793.3 537.5 L797.1 538.0 L801.0 539.0 L804.8 538.1 L808.7 539.8 L812.5 539.2 L816.4 538.1 L820.2 537.1 L824.1 538.7 L827.9 537.5 L831.8 537.6 L835.7 538.7 L839.5 539.0 L843.4 535.8 L847.2 535.3 L851.1 533.9 L854.9 537.0 L858.8 538.1 L862.6 537.4 L866.5 535.0 L870.3 535.7 L874.2 535.2 L878.0 536.9 L881.9 536.7 L885.7 537.1 L889.6 539.2 L893.5 539.5 L897.3 536.1 L901.2 537.2 L905.0 537.4 L908.9 535.8 L912.7 535.0 L916.6 535.7 L920.4 537.0 L924.3 536.3 L928.1 536.7 L932.0 534.4 L935.8 534.8 L939.7 533.9 L943.5 534.1 L947.4 535.0 L951.2 532.8 L955.1 532.8 L959.0 536.7 L962.8 537.2 L966.7 535.6 L970.5 532.5 L974.4 528.8 L978.2 525.4 L982.1 527.0 L985.9 525.8 L989.8 530.6 L993.6 530.2 L997.5 528.1 L1001.3 532.5 L1005.2 525.1 L1009.0 530.0 L1012.9 532.7 L1016.8 535.6 L1020.6 534.5 L1024.5 533.6 L1028.3 531.8 L1032.2 533.5 L1036.0 533.5 L1039.9 531.5 L1043.7 532.0 L1047.6 532.7 L1051.4 532.8 L1055.3 538.1 L1059.1 534.9 L1063.0 538.2 L1066.8 540.5 L1070.7 535.3 L1074.6 537.8 L1078.4 536.9 L1082.3 536.6 L1086.1 537.4 L1090.0 535.7 L1093.8 536.6 L1097.7 535.3 L1101.5 535.3 L1105.4 533.0 L1109.2 534.9 L1113.1 534.4 L1116.9 535.6 L1120.8 533.1 L1124.6 535.4 L1128.5 538.2 L1132.4 535.8 L1136.2 535.7 L1140.1 535.8 L1143.9 535.0 L1147.8 536.8 L1151.6 537.0 L1155.5 537.3 L1159.3 533.6 L1163.2 534.3 L1167.0 533.6 L1170.9 537.5 L1174.7 536.1 L1178.6 534.9 L1182.4 536.1 L1186.3 535.6 L1190.2 534.1 L1194.0 533.5 L1196.6 533.5 L1196.6 553.4 Z" fill="#d4d8e1" clip-path="url(#cl)"/><path d="M17.6 553.4 L17.6 529.5 L18.2 529.0 L23.6 527.8 L28.5 527.2 L33.5 526.2 L41.0 528.5 L44.0 529.5 L53.4 529.1 L57.3 527.4 L61.1 528.0 L65.0 528.2 L68.8 526.6 L72.7 528.2 L76.5 528.4 L80.4 525.1 L84.3 528.9 L88.1 528.0 L92.0 528.2 L95.8 527.2 L99.7 528.8 L103.5 529.8 L107.4 529.5 L111.2 527.7 L115.1 527.4 L118.9 531.2 L122.8 529.3 L126.6 529.6 L130.5 528.4 L134.3 525.0 L138.2 525.8 L142.1 525.3 L145.9 525.9 L149.8 525.1 L153.6 525.5 L157.5 523.7 L161.3 523.3 L165.2 528.4 L169.0 530.2 L172.9 525.4 L176.7 525.0 L180.6 521.1 L184.4 521.0 L188.3 520.8 L192.1 521.2 L196.0 521.5 L199.9 522.7 L203.7 523.3 L207.6 523.9 L211.4 522.7 L215.3 520.8 L219.1 518.9 L223.0 523.1 L226.8 514.7 L230.7 516.0 L234.5 521.8 L238.4 520.3 L242.2 519.5 L246.1 519.0 L249.9 522.0 L253.8 522.8 L257.7 522.6 L261.5 519.0 L265.4 512.9 L269.2 516.1 L273.1 516.8 L276.9 514.6 L280.8 513.4 L284.6 518.6 L288.5 519.1 L292.3 513.0 L296.2 518.3 L300.0 517.7 L303.9 518.7 L307.7 523.4 L311.6 519.4 L315.5 519.8 L319.3 518.7 L323.2 521.9 L327.0 523.5 L330.9 524.2 L334.7 523.5 L338.6 525.6 L342.4 524.3 L346.3 522.1 L350.1 527.6 L354.0 530.4 L357.8 530.1 L361.7 526.3 L365.5 528.4 L369.4 530.8 L373.3 529.7 L377.1 531.9 L381.0 533.2 L384.8 534.0 L388.7 536.4 L392.5 537.7 L396.4 538.3 L400.2 538.1 L404.1 540.0 L407.9 540.0 L411.8 540.7 L415.6 539.9 L419.5 540.2 L423.3 542.1 L427.2 541.9 L431.1 542.8 L434.9 543.5 L438.8 545.9 L442.6 546.4 L446.5 545.8 L450.3 545.1 L454.2 545.2 L458.0 545.3 L461.9 544.3 L465.7 542.9 L469.6 542.9 L473.4 543.8 L477.3 542.9 L481.1 545.2 L485.0 545.6 L488.9 546.6 L492.7 546.5 L496.6 543.5 L500.4 540.6 L504.3 546.8 L508.1 545.9 L512.0 547.5 L515.8 547.3 L519.7 546.7 L523.5 547.3 L527.4 547.0 L531.2 546.0 L535.1 547.3 L538.9 548.3 L542.8 546.8 L546.7 546.1 L550.5 546.3 L554.4 546.5 L558.2 546.6 L562.1 547.2 L565.9 546.4 L569.8 546.6 L573.6 546.6 L577.5 546.5 L581.3 546.3 L585.2 546.2 L589.0 546.0 L592.9 545.5 L596.7 544.7 L600.6 545.4 L604.5 544.7 L608.3 544.7 L612.2 544.2 L616.0 544.8 L619.9 544.6 L623.7 544.4 L627.6 542.8 L631.4 543.3 L635.3 543.3 L639.1 542.2 L643.0 541.6 L646.8 540.9 L650.7 544.0 L654.5 543.4 L658.4 545.2 L662.3 542.5 L666.1 541.9 L670.0 543.4 L673.8 541.8 L677.7 542.8 L681.5 544.3 L685.4 542.9 L689.2 540.6 L693.1 543.7 L696.9 543.3 L700.8 540.6 L704.6 542.0 L708.5 542.0 L712.3 542.7 L716.2 541.4 L720.1 541.4 L723.9 539.6 L727.8 541.4 L731.6 540.2 L735.5 539.5 L739.3 541.3 L743.2 540.8 L747.0 539.2 L750.9 541.8 L754.7 541.1 L758.6 540.9 L762.4 539.5 L766.3 541.0 L770.1 540.8 L774.0 540.4 L777.9 537.3 L781.7 539.2 L785.6 538.1 L789.4 536.2 L793.3 537.5 L797.1 538.0 L801.0 539.0 L804.8 538.1 L808.7 539.8 L812.5 539.2 L816.4 538.1 L820.2 537.1 L824.1 538.7 L827.9 537.5 L831.8 537.6 L835.7 538.7 L839.5 539.0 L843.4 535.8 L847.2 535.3 L851.1 533.9 L854.9 537.0 L858.8 538.1 L862.6 537.4 L866.5 535.0 L870.3 535.7 L874.2 535.2 L878.0 536.9 L881.9 536.7 L885.7 537.1 L889.6 539.2 L893.5 539.5 L897.3 536.1 L901.2 537.2 L905.0 537.4 L908.9 535.8 L912.7 535.0 L916.6 535.7 L920.4 537.0 L924.3 536.3 L928.1 536.7 L932.0 534.4 L935.8 534.8 L939.7 533.9 L943.5 534.1 L947.4 535.0 L951.2 532.8 L955.1 532.8 L959.0 536.7 L962.8 537.2 L966.7 535.6 L970.5 532.5 L974.4 528.8 L978.2 525.4 L982.1 527.0 L985.9 525.8 L989.8 530.6 L993.6 530.2 L997.5 528.1 L1001.3 532.5 L1005.2 525.1 L1009.0 530.0 L1012.9 532.7 L1016.8 535.6 L1020.6 534.5 L1024.5 533.6 L1028.3 531.8 L1032.2 533.5 L1036.0 533.5 L1039.9 531.5 L1043.7 532.0 L1047.6 532.7 L1051.4 532.8 L1055.3 538.1 L1059.1 534.9 L1063.0 538.2 L1066.8 540.5 L1070.7 535.3 L1074.6 537.8 L1078.4 536.9 L1082.3 536.6 L1086.1 537.4 L1090.0 535.7 L1093.8 536.6 L1097.7 535.3 L1101.5 535.3 L1105.4 533.0 L1109.2 534.9 L1113.1 534.4 L1116.9 535.6 L1120.8 533.1 L1124.6 535.4 L1128.5 538.2 L1132.4 535.8 L1136.2 535.7 L1140.1 535.8 L1143.9 535.0 L1147.8 536.8 L1151.6 537.0 L1155.5 537.3 L1159.3 533.6 L1163.2 534.3 L1167.0 533.6 L1170.9 537.5 L1174.7 536.1 L1178.6 534.9 L1182.4 536.1 L1186.3 535.6 L1190.2 534.1 L1194.0 533.5 L1196.6 533.5 L1196.6 553.4 Z" fill="#f3f4f8" clip-path="url(#cr)"/><rect x="50.8" y="553.4" width="1151.2" height="18.6" fill="#d8d8d8"/><rect x="16" y="553" width="34.8" height="0.8" fill="#d0cfe0"/><rect x="16" y="507.1" width="35.5" height="1.1" fill="#111"/><rect x="50.3" y="507.1" width="1.6" height="65.8" fill="#151515"/><rect x="50.3" y="571.7" width="1152.7" height="1.2" fill="#111"/><rect x="1201.5" y="506.6" width="1.5" height="66.3" fill="#111"/><rect x="1197.6" y="506.6" width="5.4" height="1.5" fill="#111"/><g fill="#ffffff"><rect x="621.0" y="557" width="1" height="7"/><rect x="623.8" y="557" width="1" height="7"/><rect x="626.5" y="557" width="1" height="7"/><rect x="629.2" y="557" width="1" height="7"/></g><g fill="#444"><rect x="622.0" y="557.6" width="1" height="7.2"/><rect x="624.8" y="557.6" width="1" height="7.2"/><rect x="627.5" y="557.6" width="1" height="7.2"/><rect x="630.2" y="557.6" width="1" height="7.2"/></g><rect x="44.5" y="519.9" width="10.6" height="19.4" rx="3.5" fill="#fff" stroke="#777" stroke-width="1.2"/><rect x="47.9" y="522.9" width="1.1" height="12.9" fill="#111"/><rect x="50.3" y="522.9" width="1.5" height="12.9" fill="#222"/><rect x="1195.7" y="519.9" width="10.6" height="19.4" rx="3.5" fill="#fff" stroke="#777" stroke-width="1.2"/><rect x="1199.1" y="522.9" width="1.1" height="12.9" fill="#111"/><rect x="1201.5" y="522.9" width="1.5" height="12.9" fill="#222"/><path d="M1220.5 536.5 L1225.3 532 L1230.1 536.5 Z M1220.1 541.1 L1225.25 546.4 L1230.4 541.1 Z" fill="#6b6b6b"/><rect x="16" y="586" width="615" height="230" fill="#f3f4f8"/><rect x="16" y="586" width="615" height="25.6" fill="#7689b5"/><rect x="16" y="610.6" width="615" height="1" fill="#6c7eab"/><text x="28" y="604.3" font-size="14.5" fill="#e8ebf3" textLength="40.5" lengthAdjust="spacingAndGlyphs" stroke="#e8ebf3" stroke-width="0.15" >Specs</text><text x="508" y="604.3" font-size="14.5" fill="#e8ebf3" textLength="111" lengthAdjust="spacingAndGlyphs" stroke="#e8ebf3" stroke-width="0.15" >© Fair Economy</text><rect x="508" y="605" width="111" height="1" fill="#e8ebf3"/><rect x="21" y="617" width="131" height="38" fill="#e6e7ed"/><text x="30.3" y="640.8" font-size="15" fill="#6b7c92" font-weight="bold" textLength="53" lengthAdjust="spacingAndGlyphs" stroke="#6b7c92" stroke-width="0.25" >Source</text><rect x="21" y="660" width="131" height="58" fill="#e6e7ed"/><text x="30.3" y="683.8" font-size="15" fill="#6b7c92" font-weight="bold" textLength="75" lengthAdjust="spacingAndGlyphs" stroke="#6b7c92" stroke-width="0.25" >Measures</text><rect x="21" y="723" width="131" height="38" fill="#e6e7ed"/><text x="30.3" y="746.8" font-size="15" fill="#6b7c92" font-weight="bold" textLength="91" lengthAdjust="spacingAndGlyphs" stroke="#6b7c92" stroke-width="0.25" >Usual Effect</text><rect x="21" y="766" width="131" height="50" fill="#e6e7ed"/><text x="30.3" y="789.8" font-size="15" fill="#6b7c92" font-weight="bold" textLength="81" lengthAdjust="spacingAndGlyphs" stroke="#6b7c92" stroke-width="0.25" >Frequency</text><text x="167" y="640.8" font-size="15" fill="#12539b" textLength="104" lengthAdjust="spacingAndGlyphs" stroke="#12539b" stroke-width="0.15" >Census Bureau</text><rect x="167" y="642" width="104" height="1" fill="#12539b"/><text x="276.5" y="640.8" font-size="15" fill="#111" textLength="5" lengthAdjust="spacingAndGlyphs" stroke="#111" stroke-width="0.15" >(</text><text x="282.5" y="640.8" font-size="15" fill="#12539b" textLength="93.5" lengthAdjust="spacingAndGlyphs" stroke="#12539b" stroke-width="0.15" >latest release</text><rect x="282.5" y="642" width="93.5" height="1" fill="#12539b"/><text x="376.5" y="640.8" font-size="15" fill="#111" textLength="5" lengthAdjust="spacingAndGlyphs" stroke="#111" stroke-width="0.15" >)</text><text x="166.8" y="684.4" font-size="15" fill="#111" textLength="435" lengthAdjust="spacingAndGlyphs" stroke="#111" stroke-width="0.15" >Annualized number of new single-family homes that were sold</text><text x="166.8" y="704.2" font-size="15" fill="#111" textLength="191" lengthAdjust="spacingAndGlyphs" stroke="#111" stroke-width="0.15" >during the previous month;</text><text x="166.8" y="746.8" font-size="15" fill="#111" textLength="362" lengthAdjust="spacingAndGlyphs" stroke="#111" stroke-width="0.15" >'Actual' greater than 'Forecast' is good for currency;</text><text x="166.8" y="790.4" font-size="15" fill="#111" textLength="422.7" lengthAdjust="spacingAndGlyphs" stroke="#111" stroke-width="0.15" >Released monthly, on the 17th business day after the month</text><text x="166.8" y="809.8" font-size="15" fill="#111" textLength="38.2" lengthAdjust="spacingAndGlyphs" stroke="#111" stroke-width="0.15" >ends;</text><rect x="643" y="586" width="610" height="26" fill="#7689b5"/><rect x="643" y="610.6" width="610" height="1" fill="#6c7eab"/><text x="655.5" y="604.3" font-size="14.5" fill="#e8ebf3" textLength="48.5" lengthAdjust="spacingAndGlyphs" stroke="#e8ebf3" stroke-width="0.15" >History</text><text x="975" y="604.3" font-size="14.5" fill="#e8ebf3" textLength="42" lengthAdjust="spacingAndGlyphs" stroke="#e8ebf3" stroke-width="0.15" >Actual</text><text x="1074" y="604.3" font-size="14.5" fill="#e8ebf3" textLength="57.5" lengthAdjust="spacingAndGlyphs" stroke="#e8ebf3" stroke-width="0.15" >Forecast</text><text x="1182.3" y="604.3" font-size="14.5" fill="#e8ebf3" textLength="58.2" lengthAdjust="spacingAndGlyphs" stroke="#e8ebf3" stroke-width="0.15" >Previous</text><rect x="643" y="612" width="610" height="32" fill="#ffffff"/><text x="655.5" y="633.2" font-size="15" fill="#12539b" textLength="91" lengthAdjust="spacingAndGlyphs" stroke="#12539b" stroke-width="0.15" >Apr 23, 2025</text><rect x="655.5" y="634" width="91" height="1" fill="#12539b"/><text x="979" y="633.2" font-size="15" fill="#1c9a1c" textLength="35" lengthAdjust="spacingAndGlyphs" stroke="#1c9a1c" stroke-width="0.15" >724K</text><text x="1085" y="633.2" font-size="15" fill="#111" textLength="35.5" lengthAdjust="spacingAndGlyphs" stroke="#111" stroke-width="0.15" >684K</text><text x="1183" y="633.2" font-size="15" fill="#111" textLength="35.3" lengthAdjust="spacingAndGlyphs" stroke="#111" stroke-width="0.15" >674K</text><path d="M1220.6 628.6 L1228 624.0 L1228 633.2 Z" fill="url(#arr)"/><rect x="643" y="644" width="610" height="31" fill="#f3f4f8"/><text x="655.5" y="665.2" font-size="15" fill="#12539b" textLength="93" lengthAdjust="spacingAndGlyphs" stroke="#12539b" stroke-width="0.15" >Mar 25, 2025</text><rect x="655.5" y="666" width="93" height="1" fill="#12539b"/><text x="979" y="665.2" font-size="15" fill="#d0101a" textLength="35" lengthAdjust="spacingAndGlyphs" stroke="#d0101a" stroke-width="0.15" >676K</text><text x="1085" y="665.2" font-size="15" fill="#111" textLength="35.5" lengthAdjust="spacingAndGlyphs" stroke="#111" stroke-width="0.15" >682K</text><text x="1183" y="665.2" font-size="15" fill="#1c9a1c" textLength="35.3" lengthAdjust="spacingAndGlyphs" stroke="#1c9a1c" stroke-width="0.15" >664K</text><path d="M1220.6 660.6 L1228 656.0 L1228 665.2 Z" fill="url(#arr)"/><rect x="643" y="675" width="610" height="32" fill="#ffffff"/><text x="655.5" y="696.2" font-size="15" fill="#12539b" textLength="91.5" lengthAdjust="spacingAndGlyphs" stroke="#12539b" stroke-width="0.15" >Feb 26, 2025</text><rect x="655.5" y="697" width="91.5" height="1" fill="#12539b"/><text x="979" y="696.2" font-size="15" fill="#d0101a" textLength="35" lengthAdjust="spacingAndGlyphs" stroke="#d0101a" stroke-width="0.15" >657K</text><text x="1085" y="696.2" font-size="15" fill="#111" textLength="35.5" lengthAdjust="spacingAndGlyphs" stroke="#111" stroke-width="0.15" >679K</text><text x="1183" y="696.2" font-size="15" fill="#1c9a1c" textLength="35.3" lengthAdjust="spacingAndGlyphs" stroke="#1c9a1c" stroke-width="0.15" >734K</text><path d="M1220.6 691.6 L1228 687.0 L1228 696.2 Z" fill="url(#arr)"/><rect x="643" y="707" width="610" height="31" fill="#f3f4f8"/><text x="655.5" y="728.2" font-size="15" fill="#12539b" textLength="90.5" lengthAdjust="spacingAndGlyphs" stroke="#12539b" stroke-width="0.15" >Jan 27, 2025</text><rect x="655.5" y="729" width="90.5" height="1" fill="#12539b"/><text x="979" y="728.2" font-size="15" fill="#1c9a1c" textLength="35" lengthAdjust="spacingAndGlyphs" stroke="#1c9a1c" stroke-width="0.15" >698K</text><text x="1085" y="728.2" font-size="15" fill="#111" textLength="35.5" lengthAdjust="spacingAndGlyphs" stroke="#111" stroke-width="0.15" >669K</text><text x="1183" y="728.2" font-size="15" fill="#1c9a1c" textLength="35.3" lengthAdjust="spacingAndGlyphs" stroke="#1c9a1c" stroke-width="0.15" >674K</text><path d="M1220.6 723.6 L1228 719.0 L1228 728.2 Z" fill="url(#arr)"/><rect x="643" y="738" width="610" height="32" fill="#ffffff"/><text x="655.5" y="759.2" font-size="15" fill="#12539b" textLength="93.3" lengthAdjust="spacingAndGlyphs" stroke="#12539b" stroke-width="0.15" >Dec 23, 2024</text><rect x="655.5" y="760" width="93.3" height="1" fill="#12539b"/><text x="979" y="759.2" font-size="15" fill="#111" textLength="35" lengthAdjust="spacingAndGlyphs" stroke="#111" stroke-width="0.15" >664K</text><text x="1085" y="759.2" font-size="15" fill="#111" textLength="35.5" lengthAdjust="spacingAndGlyphs" stroke="#111" stroke-width="0.15" >666K</text><text x="1183" y="759.2" font-size="15" fill="#1c9a1c" textLength="35.3" lengthAdjust="spacingAndGlyphs" stroke="#1c9a1c" stroke-width="0.15" >627K</text><path d="M1220.6 754.6 L1228 750.0 L1228 759.2 Z" fill="url(#arr)"/><rect x="643" y="770" width="610" height="28" fill="#e7e9f0"/><rect x="643" y="769.5" width="610" height="1" fill="#d5d8e0"/><rect x="1186" y="771" width="1" height="26" fill="#d5d8e0"/><g fill="#6590c6"><rect x="658.6" y="779" width="4" height="5.6"/><path d="M655.8 784.3 L665.4 784.3 L660.6 788.6 Z"/><rect x="659.8" y="788" width="1.6" height="1.4"/><rect x="655.9" y="789.2" width="9.3" height="1.8"/></g><text x="669.8" y="788.8" font-size="15" fill="#0f4f9c" textLength="33.5" lengthAdjust="spacingAndGlyphs" stroke="#0f4f9c" stroke-width="0.15" >More</text><text x="1198.5" y="788" font-size="15" fill="#12539b" textLength="42" lengthAdjust="spacingAndGlyphs" stroke="#12539b" stroke-width="0.15" >Graph</text><rect x="1198.5" y="789" width="42" height="1" fill="#12539b"/><rect x="643" y="811" width="610" height="5" fill="#7689b5"/></svg></body></html>
